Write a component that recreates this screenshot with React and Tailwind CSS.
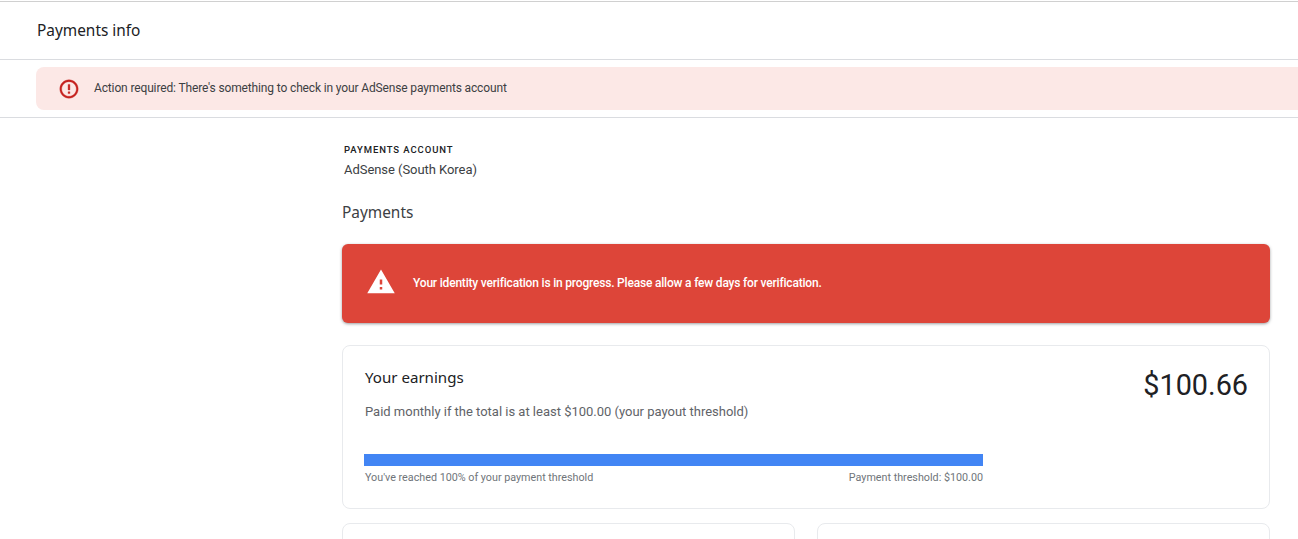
import React from 'react';

const AlertCircle = () => (
  <svg className="w-[22px] h-[22px] shrink-0" viewBox="0 0 24 24" fill="#c5221f" stroke="#c5221f" strokeWidth="0.4">
    <path d="M11 15h2v2h-2zm0-8h2v6h-2zm.99-5C6.47 2 2 6.48 2 12s4.47 10 9.99 10C17.52 22 22 17.52 22 12S17.52 2 11.99 2zM12 20c-4.42 0-8-3.58-8-8s3.58-8 8-8 8 3.58 8 8-3.58 8-8 8z" />
  </svg>
);

const WarningTriangle = () => (
  <svg className="w-[30px] h-[30px] mb-[3px] shrink-0" viewBox="0 0 24 24" fill="#fff">
    <path d="M1 21h22L12 2 1 21zm12-3h-2v-2h2v2zm0-4h-2v-4h2v4z" />
  </svg>
);

export default function App() {
  return (
    <div className="h-[539px] overflow-hidden bg-white font-['Roboto',sans-serif]">
      {/* Page title */}
      <div className="mt-px h-[59px] border-y border-[#d0d0d0] border-b-[#dadce0] flex items-center pl-[37px]">
        <h1 className="text-[15.4px] leading-[20px] text-[#202124] font-['Noto_Sans',sans-serif]">Payments info</h1>
      </div>

      {/* Action required banner */}
      <div className="h-[58px] border-b border-[#dadce0] pl-9 pt-[7px]">
        <div className="h-[43px] bg-[#fce8e6] rounded-l-lg flex items-center pl-[22px] gap-[14px]">
          <AlertCircle />
          <span className="text-[12px] leading-[16px] pb-0.5 tracking-[-0.14px] text-[#3c4043]">Action required: There's something to check in your AdSense payments account</span>
        </div>
      </div>

      <main className="ml-[342px] w-[928px]">
        <div className="pl-0.5 pt-[25px]">
          <div className="text-[9.5px] leading-[14px] font-medium tracking-[0.92px] text-[#202124]">PAYMENTS ACCOUNT</div>
          <div className="text-[13px] leading-[20px] mt-[3px] tracking-[-0.05px] text-[#3c4043]">AdSense (South Korea)</div>
        </div>
        <h2 className="text-[15.4px] leading-[20px] mt-[23px] text-[#3c4043] font-['Noto_Sans',sans-serif]">Payments</h2>

        <div className="mt-[21px] h-[79px] bg-[#dd4539] rounded-md shadow-[0_1px_3px_rgba(60,64,67,0.5)] flex items-center pl-6 gap-[17px]">
          <WarningTriangle />
          <span className="text-[12px] leading-[16px] pb-0.5 font-medium tracking-[-0.19px] text-white">Your identity verification is in progress. Please allow a few days for verification.</span>
        </div>

        {/* Earnings card */}
        <section className="mt-[22px] h-[164px] border border-[#e8eaed] rounded-lg px-[21px] pt-5 flex justify-between">
          <div className="w-[619px]">
            <h3 className="text-[15.1px] leading-[22px] pl-px text-[#202124] font-['Noto_Sans',sans-serif]">Your earnings</h3>
            <p className="text-[13px] leading-[20px] mt-[14px] pl-px tracking-[-0.01px] text-[#5f6368]">Paid monthly if the total is at least $100.00 (your payout threshold)</p>
            <div className="h-3 bg-[#4285f4] mt-8" />
            <div className="flex justify-between text-[10.75px] leading-[14px] mt-[5px] pl-px text-[#70757a]">
              <span>You've reached 100% of your payment threshold</span>
              <span>Payment threshold: $100.00</span>
            </div>
          </div>
          <div className="text-[28.8px] leading-[36px] mt-px text-[#202124]">$100.66</div>
        </section>

        {/* Lower cards */}
        <div className="mt-[14px] grid grid-cols-[453px_453px] gap-[22px]">
          <div className="h-[40px] border border-[#e8eaed] rounded-lg" />
          <div className="h-[40px] border border-[#e8eaed] rounded-lg" />
        </div>
      </main>
    </div>
  );
}
